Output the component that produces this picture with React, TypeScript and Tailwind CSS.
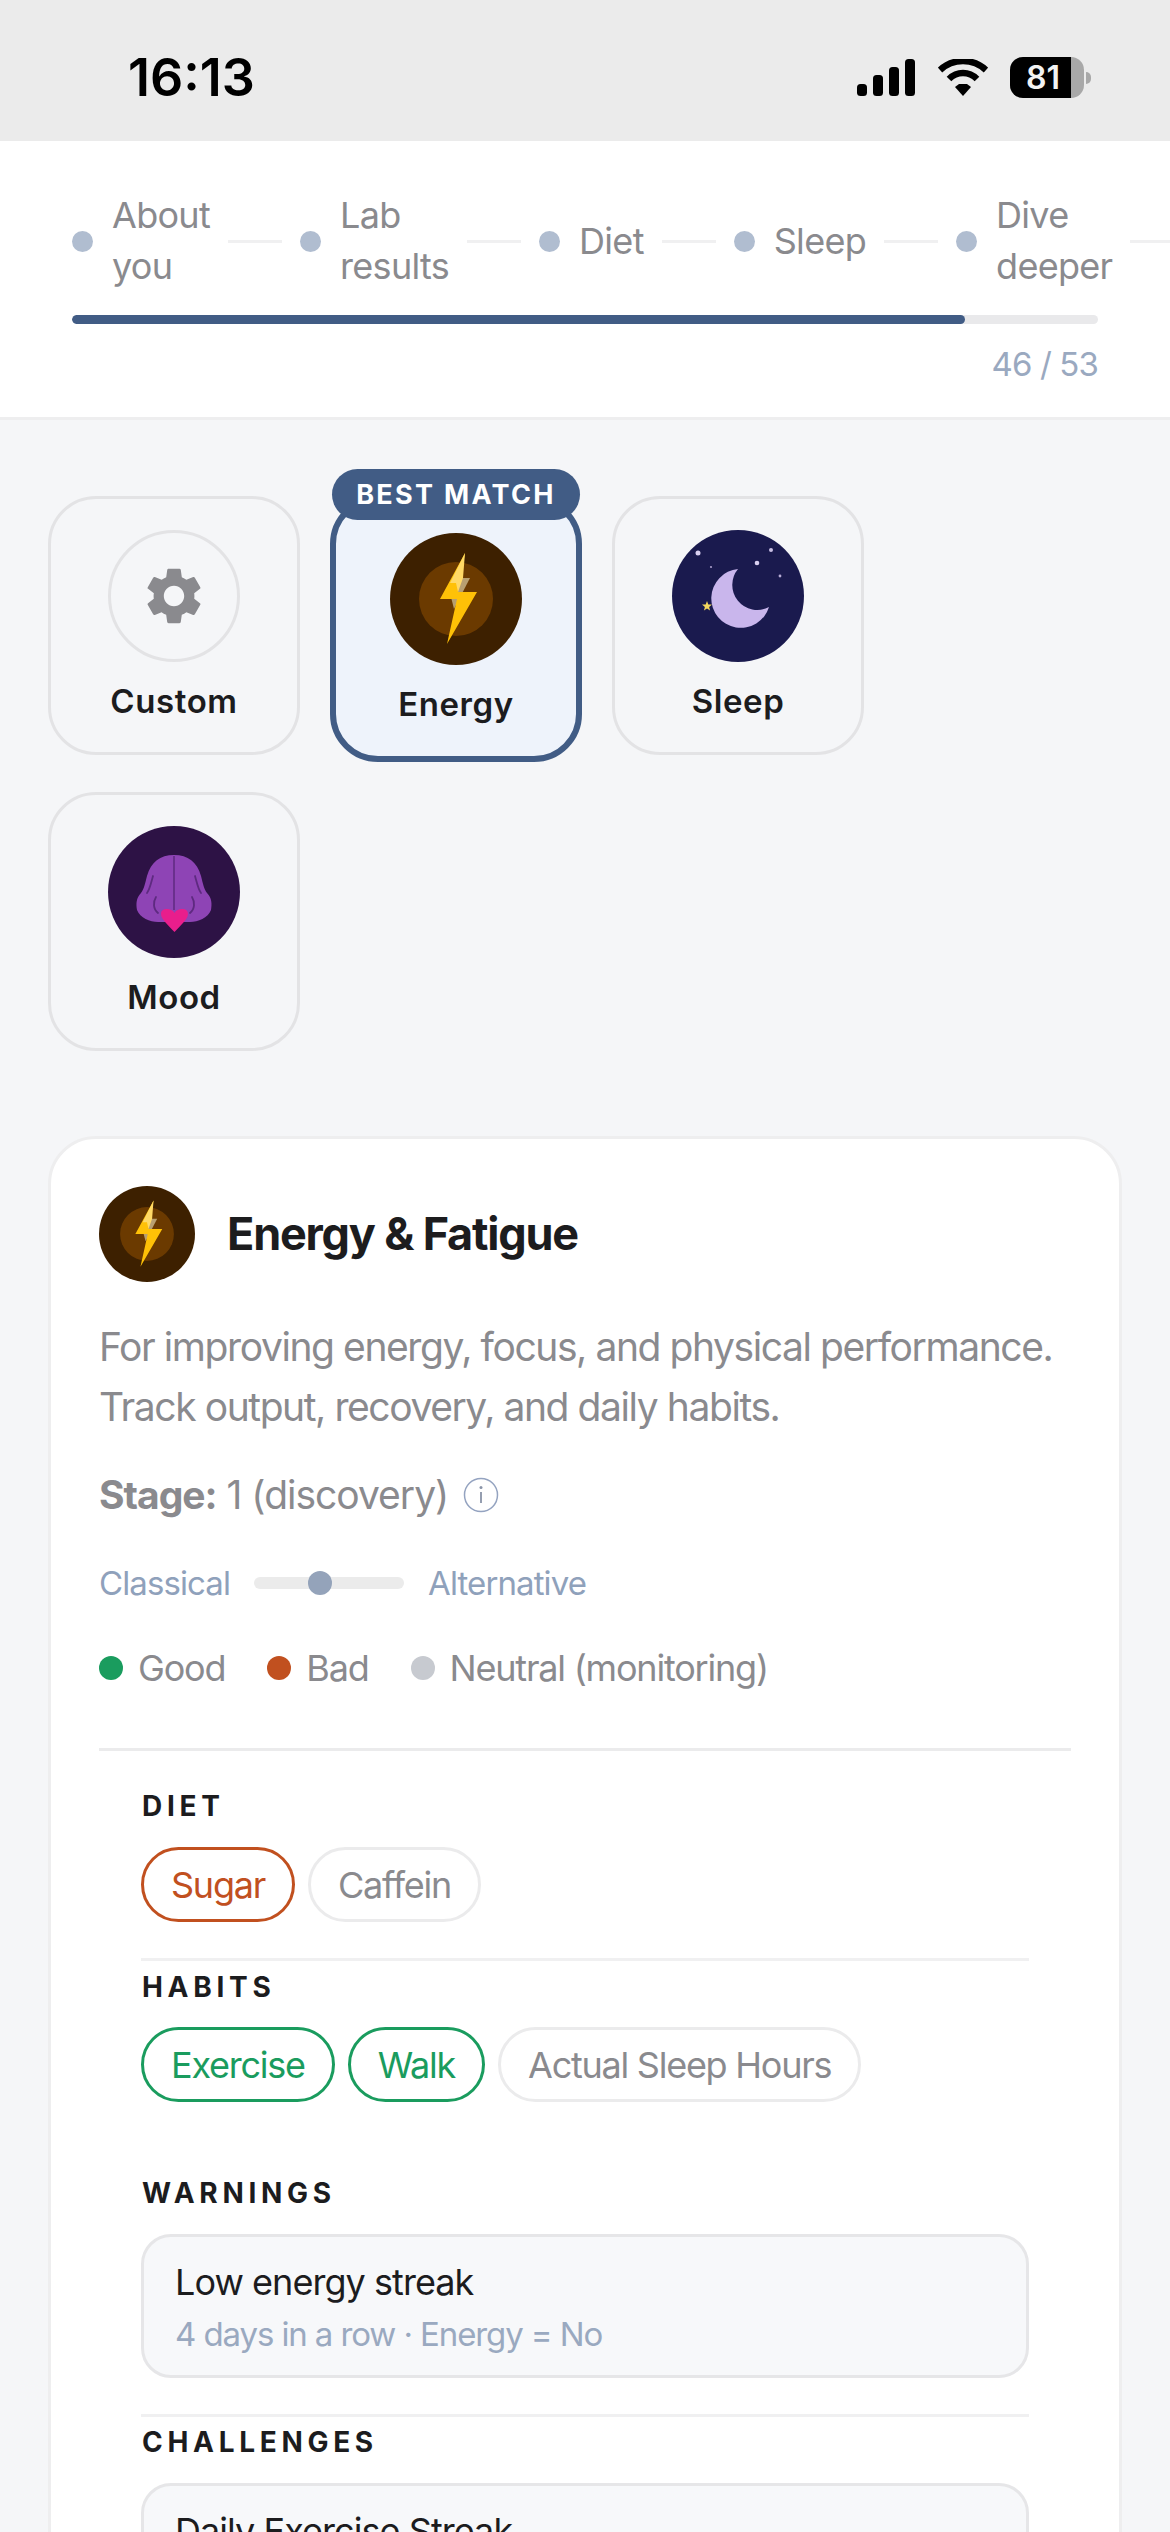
import { MdSettings } from "react-icons/md";

const FONT = "font-['Inter','Noto_Sans',sans-serif]";

function EnergyBadge({ size }: { size: number }) {
  return (
    <svg width={size} height={size} viewBox="0 0 132 132" className="block shrink-0">
      <circle cx="66" cy="66" r="66" fill="#3d2000" />
      <circle cx="66" cy="66" r="37" fill="#6b3a00" />
      <polygon points="71,45 80,45 64,76 60,60" fill="#b89f70" />
      <polygon points="75,20 50,66 67,66 57,111 87,59 68,59" fill="#ffc107" />
      <polygon points="75,20 60,50 66,50 68,59 73,45" fill="#ffd966" />
    </svg>
  );
}

function SleepBadge() {
  return (
    <svg width="132" height="132" viewBox="0 0 132 132" className="block shrink-0">
      <circle cx="66" cy="66" r="66" fill="#1a1a4e" />
      <path d="M66 39 A29.500 29.500 0 1 0 97 77 A25 25 0 0 1 66 39 Z" fill="#c9b6ec" />
      <circle cx="26" cy="23" r="2.500" fill="#d9d0f0" />
      <circle cx="99" cy="20" r="2" fill="#c9bfe4" />
      <circle cx="85" cy="33" r="2.300" fill="#d9d0f0" />
      <circle cx="39" cy="37" r="1.100" fill="#a79cc9" />
      <circle cx="108" cy="46" r="1.400" fill="#b7acd6" />
      <polygon points="35,71 36.300,74.500 40,74.600 37.100,76.900 38.100,80.500 35,78.400 31.900,80.500 32.900,76.900 30,74.600 33.700,74.500" fill="#f4d75e" />
    </svg>
  );
}

function MoodBadge() {
  return (
    <svg width="132" height="132" viewBox="0 0 132 132" className="block shrink-0">
      <circle cx="66" cy="66" r="66" fill="#2d1245" />
      <path d="M66 29 C52 29 43 36 39 50 C37 58 36 63 33 67 C28 72 28 78 29 84 C32 92 42 96 50 96 L82 96 C90 96 100 92 103 84 C104 78 104 72 99 67 C96 63 95 58 93 50 C89 36 80 29 66 29 Z" fill="#8e44b5" />
      <path d="M66 30 V84" stroke="#5e2a80" strokeWidth="1.500" fill="none" />
      <path d="M45 50 C43 57 42 63 39 67 M48 71 C45 76 45 83 50 87 M87 50 C89 57 90 63 93 67 M84 71 C87 76 87 83 82 87" stroke="#5e2a80" strokeWidth="1.800" strokeLinecap="round" fill="none" />
      <path d="M66.500 106 C60 99 53 93 53 88 C53 84 56 83 59 83 C62 83 65 84 66.500 87 C68 84 71 83 74 83 C77 83 80 84 80 88 C80 93 73 99 66.500 106 Z" fill="#e91e8c" />
    </svg>
  );
}

function StatusIcons() {
  return (
    <div className="flex items-center">
      <svg width="58" height="37" viewBox="0 0 58 37" className="block">
        <rect x="0" y="25" width="10" height="12" rx="3.500" fill="#000" />
        <rect x="16" y="16" width="10" height="21" rx="3.500" fill="#000" />
        <rect x="32" y="8" width="10" height="29" rx="3.500" fill="#000" />
        <rect x="48" y="0" width="10" height="37" rx="3.500" fill="#000" />
      </svg>
      <svg width="50" height="37" viewBox="0 0 50 37" className="ml-[23px] block">
        <path d="M2 11 C15 -1 35 -1 48 11" stroke="#000" strokeWidth="6.500" fill="none" />
        <path d="M11 20 C19 12 31 12 39 20" stroke="#000" strokeWidth="6.500" fill="none" />
        <polygon points="25,37 17,28 21,25 29,25 33,28" fill="#000" />
      </svg>
      <div className="relative ml-[22px] flex h-[41px] w-[74px] items-center overflow-hidden rounded-[13px] bg-[#a8a8a8]">
        <div className="flex h-full w-[61px] items-center justify-center bg-black pl-[5px] text-[32px] font-semibold leading-none text-[#f2f2f2]">
          81
        </div>
      </div>
      <div className="ml-[2px] h-[12px] w-[5px] rounded-r-full bg-[#a8a8a8]" />
    </div>
  );
}

function Step({ label }: { label: string }) {
  return (
    <div className="flex shrink-0 items-center gap-[19px]">
      <span className="h-[21px] w-[21px] shrink-0 rounded-full bg-[#b0bdd0]" />
      <span className="w-min text-[36px] leading-[51px] tracking-[-0.7px] text-[#8a8a8e]">{label}</span>
    </div>
  );
}

const Connector = () => <span className="h-[3px] w-[54px] shrink-0 bg-[#f0f0f1]" />;

function GoalCard({ label, selected, children }: { label: string; selected?: boolean; children: React.ReactNode }) {
  return (
    <div
      className={
        selected
          ? "relative flex h-[266px] w-[252px] flex-col items-center rounded-[48px] border-[6px] border-[#415c85] bg-[#eef3fb] pt-[31px]"
          : "flex h-[259px] w-[252px] flex-col items-center rounded-[48px] border-[3px] border-[#e3e3e5] pt-[31px]"
      }
    >
      {selected && (
        <span className="absolute left-1/2 top-[-33px] flex h-[51px] w-[248px] -translate-x-1/2 items-center justify-center rounded-[26px] bg-[#415c85] text-[27px] font-bold leading-none tracking-[2.300px] text-white">
          BEST MATCH
        </span>
      )}
      {children}
      <span className="mt-[19px] text-[33px] font-semibold leading-[40px] tracking-[0.6px] text-[#1c1c1e]">{label}</span>
    </div>
  );
}

function Chip({ label, tone }: { label: string; tone?: "good" | "bad" }) {
  const cls =
    tone === "good"
      ? "border-[#1a9c5e] text-[#1a9c5e]"
      : tone === "bad"
        ? "border-[#c1501f] text-[#c1501f]"
        : "border-[#ebebec] text-[#8a8a8e]";
  return (
    <span className={`flex h-[75px] items-center rounded-full border-[3px] px-[27px] text-[36px] leading-none tracking-[-1.250px] ${cls}`}>{label}</span>
  );
}

const SectionTitle = ({ children }: { children: string }) => (
  <div className="pl-[1px] text-[28px] font-bold leading-[36px] tracking-[4.700px] text-[#1c1c1e]">{children}</div>
);

function InfoCard({ title, detail }: { title: string; detail: string }) {
  return (
    <div className="mt-[23px] rounded-[30px] border-[3px] border-[#e6e6e8] bg-[#f7f8fa] px-[31px] pb-[18px] pt-[21px]">
      <div className="text-[36px] leading-[48px] tracking-[-0.95px] text-[#1c1c1e]">{title}</div>
      <div className="mt-[5px] text-[33px] leading-[46px] tracking-[-1.100px] text-[#9aa9c0]">{detail}</div>
    </div>
  );
}

function LegendItem({ color, label }: { color: string; label: string }) {
  return (
    <div className="flex items-center gap-[15px]">
      <span className={`h-[24px] w-[24px] rounded-full ${color}`} />
      <span>{label}</span>
    </div>
  );
}

export default function App() {
  return (
    <div className={`${FONT} h-[2532px] w-[1170px] overflow-hidden bg-[#f5f6f8]`}>
      {/* status bar */}
      <div className="flex h-[141px] items-center justify-between bg-[#ebebeb] pl-[128px] pr-[79px] pt-[14px]">
        <span className="text-[52px] font-semibold leading-none text-black">16:13</span>
        <StatusIcons />
      </div>

      {/* questionnaire progress */}
      <div className="h-[279px] border-b-[3px] border-[#eeeeef] bg-white pt-[49px]">
        <div className="flex h-[102px] items-center gap-[18px] overflow-hidden pl-[72px]">
          <Step label="About you" />
          <Connector />
          <Step label="Lab results" />
          <Connector />
          <Step label="Diet" />
          <Connector />
          <Step label="Sleep" />
          <Connector />
          <Step label="Dive deeper" />
          <Connector />
        </div>
        <div className="mx-[72px] mt-[23px] h-[9px] overflow-hidden rounded-full bg-[#e9e9eb]">
          <div className="h-full w-[893px] rounded-full bg-[#415c85]" />
        </div>
        <div className="mx-[72px] mt-[20px] text-right text-[33px] leading-[40px] tracking-[-0.9px] text-[#9aa9c0]">46 / 53</div>
      </div>

      <div className="px-[48px] pt-[76px]">
        <div className="grid grid-cols-[252px_252px_252px] items-start gap-[30px]">
          <GoalCard label="Custom">
            <div className="flex h-[132px] w-[132px] items-center justify-center rounded-full border-[3px] border-[#e3e3e5]">
              <MdSettings size={68} color="#8a8a8e" />
            </div>
          </GoalCard>
          <GoalCard label="Energy" selected>
            <EnergyBadge size={132} />
          </GoalCard>
          <GoalCard label="Sleep">
            <SleepBadge />
          </GoalCard>
          <GoalCard label="Mood">
            <MoodBadge />
          </GoalCard>
        </div>

        {/* protocol details */}
        <div className="mt-[85px] rounded-[48px] border-[3px] border-[#eeeeef] bg-white px-[48px] pb-[48px] pt-[47px]">
          <div className="flex items-center gap-[32px]">
            <EnergyBadge size={96} />
            <h2 className="text-[45px] font-bold leading-[56px] tracking-[-1.200px] text-[#1c1c1e]">Energy &amp; Fatigue</h2>
          </div>
          <p className="mt-[35px] text-[39px] leading-[60px] tracking-[-1.420px] text-[#8a8a8e]">
            For improving energy, focus, and physical performance. Track output, recovery, and daily habits.
          </p>
          <div className="mt-[28px] flex items-center text-[39px] leading-[60px] tracking-[-1px] text-[#8a8a8e]">
            <span>
              <strong className="font-bold">Stage:</strong> 1 (discovery)
            </span>
            <svg width="36" height="36" viewBox="0 0 36 36" className="ml-[15px] block">
              <circle cx="18" cy="18" r="16.500" stroke="#94a3c0" strokeWidth="1.500" fill="none" />
              <circle cx="18" cy="10.500" r="1.500" fill="#8a94a8" />
              <path d="M18 15 V26" stroke="#8a94a8" strokeWidth="1.800" />
            </svg>
          </div>
          <div className="mt-[38px] flex h-[40px] items-center gap-[24px] text-[33px] leading-[40px] tracking-[-0.9px] text-[#8fa1bb]">
            <span>Classical</span>
            <div className="relative h-[12px] w-[150px] rounded-full bg-[#ebebeb]">
              <span className="absolute left-[54px] top-[-6px] h-[24px] w-[24px] rounded-full bg-[#94a3ba]" />
            </div>
            <span>Alternative</span>
          </div>
          <div className="mt-[41px] flex h-[48px] items-center gap-[42px] text-[36px] leading-[48px] tracking-[-1.200px] text-[#8a8a8e]">
            <LegendItem color="bg-[#1a9c5e]" label="Good" />
            <LegendItem color="bg-[#c1501f]" label="Bad" />
            <LegendItem color="bg-[#c7cad0]" label="Neutral (monitoring)" />
          </div>

          <div className="mt-[56px] border-t-[3px] border-[#ebebec] px-[42px] pt-[37px]">
            <SectionTitle>DIET</SectionTitle>
            <div className="mt-[23px] flex flex-wrap gap-[13px]">
              <Chip label="Sugar" tone="bad" />
              <Chip label="Caffein" />
            </div>
            <div className="mt-[36px] border-t-[3px] border-[#f0f0f1] pt-[8px]">
              <SectionTitle>HABITS</SectionTitle>
              <div className="mt-[22px] flex flex-wrap gap-[13px]">
                <Chip label="Exercise" tone="good" />
                <Chip label="Walk" tone="good" />
                <Chip label="Actual Sleep Hours" />
              </div>
            </div>
            <div className="mt-[73px]">
              <SectionTitle>WARNINGS</SectionTitle>
              <InfoCard title="Low energy streak" detail="4 days in a row · Energy = No" />
            </div>
            <div className="mt-[36px] border-t-[3px] border-[#f0f0f1] pt-[7px]">
              <SectionTitle>CHALLENGES</SectionTitle>
              <InfoCard title="Daily Exercise Streak" detail="7 days in a row" />
            </div>
          </div>
        </div>
      </div>
    </div>
  );
}
